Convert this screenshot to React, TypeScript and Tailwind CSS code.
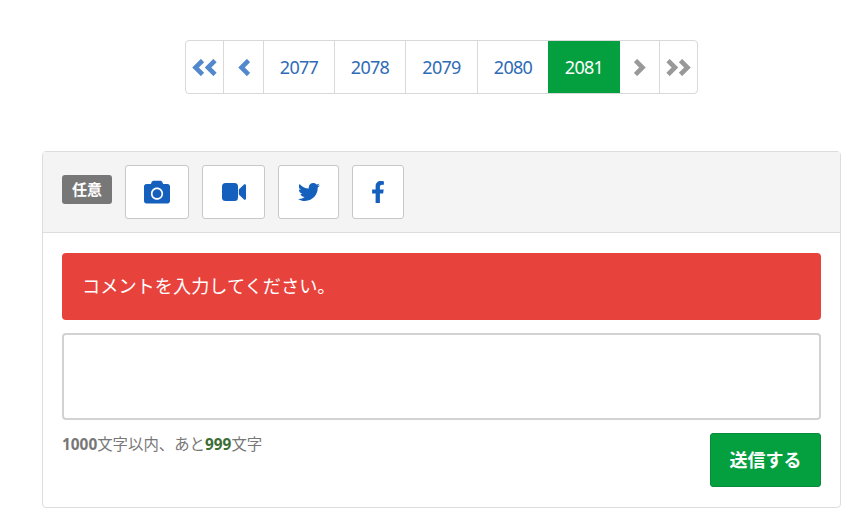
import { FaCamera, FaFacebookF, FaTwitter } from "react-icons/fa";

const font = "font-['Noto_Sans','Noto_Sans_CJK_JP',sans-serif]";

const years = [
    { label: "2077", width: "w-[71px] border-r" },
    { label: "2078", width: "w-[71px] border-r" },
    { label: "2079", width: "w-[72px] border-r" },
    { label: "2080", width: "w-[70px]" },
];

// thick pager chevron, points left unless flipped
function Chevrons({ count, flip }: { count: number; flip?: boolean }) {
    return (
        <svg
            width={count === 2 ? 25 : 12}
            height="17"
            viewBox={count === 2 ? "0 0 25 17" : "0 0 12 17"}
            fill="none"
            stroke="currentColor"
            strokeWidth="4.6"
            className={flip ? "-scale-x-100" : ""}
        >
            <polyline points="10.5,1.5 3.5,8.5 10.5,15.5" />
            {count === 2 && <polyline points="23,1.5 16,8.5 23,15.5" />}
        </svg>
    );
}

function VideoIcon() {
    return (
        <svg width="24" height="18" viewBox="0 0 24 18" fill="currentColor">
            <rect x="0" y="0" width="16" height="18" rx="3.5" />
            <path d="M16.8 6.5 22 1.6c.8-.7 2-.2 2 .9v13c0 1.1-1.2 1.6-2 .9l-5.2-4.9z" />
        </svg>
    );
}

const mediaButtons = [
    { key: "camera", width: "w-[64px]", icon: <FaCamera size={26} /> },
    { key: "video", width: "w-[63px]", icon: <VideoIcon /> },
    { key: "twitter", width: "w-[61px]", icon: <FaTwitter size={22} /> },
    { key: "facebook", width: "w-[52px]", icon: <FaFacebookF size={22} /> },
];

export default function App() {
    return (
        <div className={`h-[510px] w-[858px] overflow-hidden bg-white ${font}`}>
            <div className="ml-[42px] w-[799px] pt-[40px]">
                {/* Pagination */}
                <div className="flex justify-center">
                    <div className="flex h-[54px] overflow-hidden rounded-[4px] border border-[#d9d9d9] bg-white text-[18px] tracking-[-0.7px] text-[#2f6bb5]">
                        <div className="flex w-[38px] items-center justify-center border-r border-[#d9d9d9] text-[#5288cc]">
                            <Chevrons count={2} />
                        </div>
                        <div className="flex w-[40px] items-center justify-center border-r border-[#d9d9d9] text-[#5288cc]">
                            <Chevrons count={1} />
                        </div>
                        {years.map((year) => (
                            <div key={year.label} className={`flex items-center justify-center border-[#d9d9d9] ${year.width}`}>
                                {year.label}
                            </div>
                        ))}
                        <div className="flex w-[72px] items-center justify-center bg-[#04a040] text-white">2081</div>
                        <div className="flex w-[40px] items-center justify-center border-r border-[#d9d9d9] text-[#999999]">
                            <Chevrons count={1} flip />
                        </div>
                        <div className="flex w-[37px] items-center justify-center text-[#999999]">
                            <Chevrons count={2} flip />
                        </div>
                    </div>
                </div>

                {/* Comment form */}
                <div className="mt-[57px] h-[357px] rounded-[4px] border border-[#dddddd]">
                    <div className="flex h-[81px] items-start border-b border-[#dddddd] bg-[#f4f4f4] pl-[19px] pt-[13px]">
                        <span className="mt-[10px] flex h-[29px] w-[50px] items-center justify-center rounded-[3px] bg-[#777777] text-[15px] font-bold text-white">
                            任意
                        </span>
                        <div className="ml-[13px] flex gap-[13px]">
                            {mediaButtons.map((button) => (
                                <div
                                    key={button.key}
                                    className={`flex h-[54px] items-center justify-center rounded-[3px] border border-[#c8c8c8] bg-white text-[#1560bd] ${button.width}`}
                                >
                                    {button.icon}
                                </div>
                            ))}
                        </div>
                    </div>

                    <div className="px-[19px] pt-[20px]">
                        <div className="flex h-[67px] items-center rounded-[4px] bg-[#e8423c] pl-[20px] text-[18.2px] text-white">
                            コメントを入力してください。
                        </div>
                        <div className="mt-[13px] h-[87px] rounded-[4px] border-2 border-[#d2d2d2] bg-white" />
                        <div className="mt-[13px] flex items-start justify-between">
                            <p className="text-[15.4px] leading-[24px] text-[#777777]">
                                <b className="font-bold">1000</b>文字以内、あと<b className="font-bold text-[#3c6e35]">999</b>文字
                            </p>
                            <div className="flex h-[54px] w-[111px] items-center justify-center rounded-[3px] border border-[#078a3a] bg-[#04a040] text-[18px] font-bold text-white">
                                送信する
                            </div>
                        </div>
                    </div>
                </div>
            </div>
        </div>
    );
}
